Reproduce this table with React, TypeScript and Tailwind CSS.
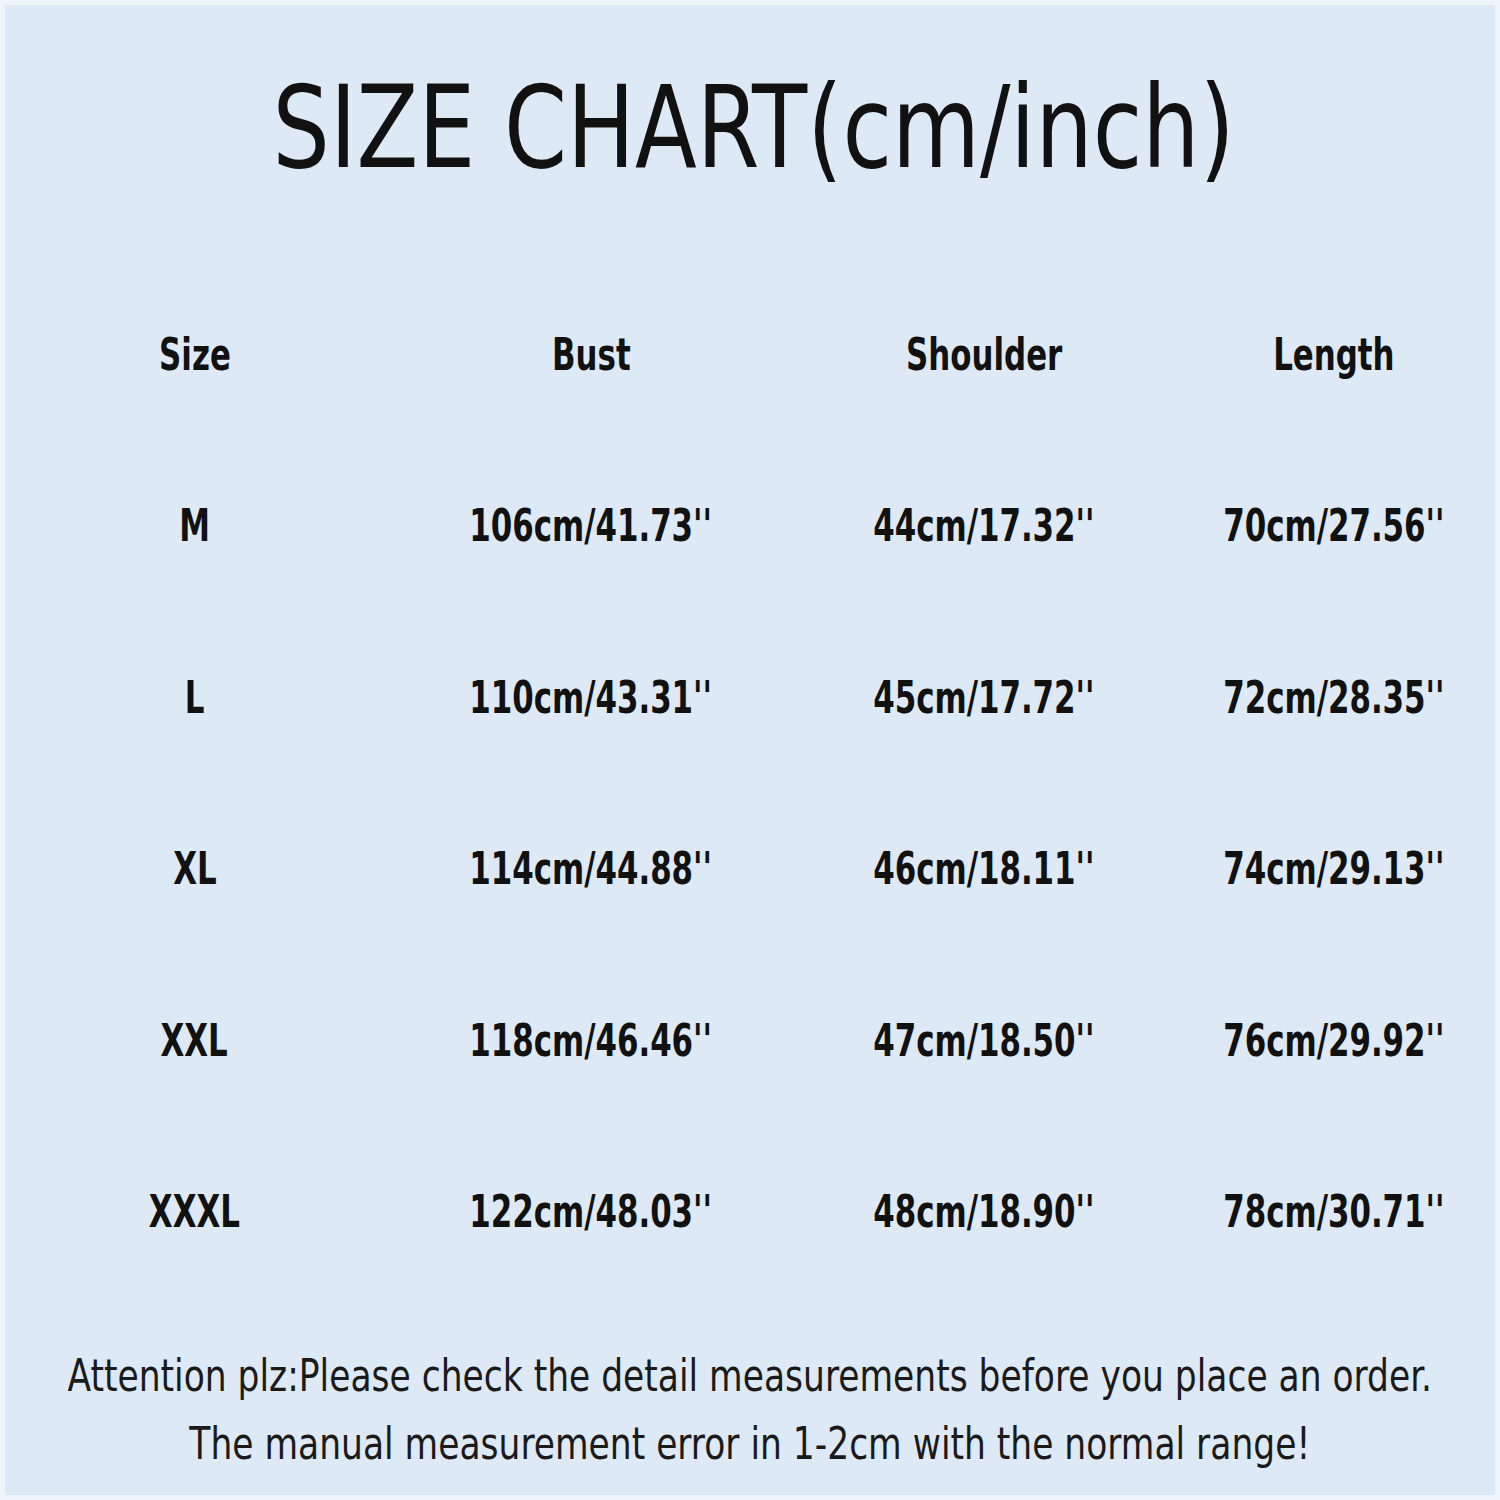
const rows = [
  ["M", "106cm/41.73''", "44cm/17.32''", "70cm/27.56''"],
  ["L", "110cm/43.31''", "45cm/17.72''", "72cm/28.35''"],
  ["XL", "114cm/44.88''", "46cm/18.11''", "74cm/29.13''"],
  ["XXL", "118cm/46.46''", "47cm/18.50''", "76cm/29.92''"],
  ["XXXL", "122cm/48.03''", "48cm/18.90''", "78cm/30.71''"],
];

const headers = ["Size", "Bust", "Shoulder", "Length"];

// no narrow font installed, so the condensed face is squeezed a bit more
const narrow = "font-['Liberation_Sans_Narrow','DejaVu_Sans_Condensed',sans-serif]";

export default function App() {
  return (
    <div className="w-[1500px] h-[1500px] bg-[#eef4fa] p-[5px]">
      <div className="w-full h-full bg-[#dde9f5] text-[#111]">
        {/* title */}
        <div className="pt-[63px] h-[264px] flex justify-center">
          <h1 className={`whitespace-nowrap text-[114px] leading-[120px] font-normal scale-x-[0.88] translate-x-[4px] ${narrow}`}>
            SIZE CHART(cm/inch)
          </h1>
        </div>

        {/* table */}
        <div className={`grid grid-cols-[379px_414px_372px_328px] auto-rows-[171.5px] font-bold text-[44px] ${narrow}`}>
          {headers.map((h) => (
            <div key={h} className="flex items-center justify-center">
              <span className="whitespace-nowrap scale-x-[0.78]">{h}</span>
            </div>
          ))}
          {rows.map((r) =>
            r.map((c, i) => (
              <div key={r[0] + i} className="flex items-center justify-center">
                <span className="whitespace-nowrap scale-x-[0.78]">{c}</span>
              </div>
            ))
          )}
        </div>

        {/* note */}
        <div className={`mt-[44px] text-[45px] leading-[68px] text-[#1a1a1a] ${narrow}`}>
          <div className="flex justify-center">
            <p className="whitespace-nowrap scale-x-[0.852]">
              Attention plz:Please check the detail measurements before you place an order.
            </p>
          </div>
          <div className="flex justify-center">
            <p className="whitespace-nowrap scale-x-[0.852]">
              The manual measurement error in 1-2cm with the normal range!
            </p>
          </div>
        </div>
      </div>
    </div>
  );
}
